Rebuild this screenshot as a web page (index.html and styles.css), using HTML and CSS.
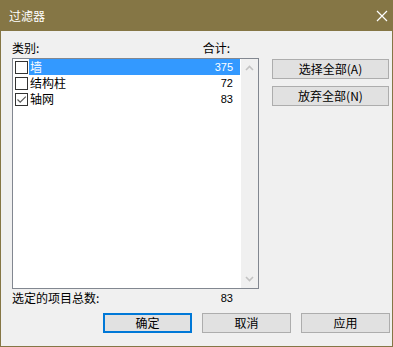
FILE: index.html
```html
<!DOCTYPE html>
<html>
<head>
<meta charset="utf-8">
<link rel="stylesheet" href="styles.css">
</head>
<body>
<div class="window">
  <div class="titlebar">
    <span class="title">过滤器</span>
    <svg class="close" width="12" height="12" viewBox="0 0 12 12"><path d="M1 1 L11 11 M11 1 L1 11" stroke="#ffffff" stroke-width="1.2" fill="none"/></svg>
  </div>
  <div class="content">
    <div class="main">
      <div class="left">
        <div class="header"><span>类别:</span><span class="total-label">合计:</span></div>
        <div class="listbox">
          <div class="rows">
            <div class="row">
              <span class="check"></span>
              <div class="item selected"><span class="name">墙</span><span class="num">375</span></div>
            </div>
            <div class="row">
              <span class="check"></span>
              <div class="item"><span class="name">结构柱</span><span class="num">72</span></div>
            </div>
            <div class="row">
              <span class="check"><svg width="11" height="11" viewBox="0 0 11 11"><path d="M1.5 5.5 L4.2 8.2 L9.8 2.6" stroke="#5a5a5a" stroke-width="1.2" fill="none"/></svg></span>
              <div class="item"><span class="name">轴网</span><span class="num">83</span></div>
            </div>
          </div>
          <div class="scrollbar">
            <svg width="9" height="6" viewBox="0 0 9 6"><path d="M1 5 L4.5 1.5 L8 5" stroke="#c3c3c3" stroke-width="1.6" fill="none"/></svg>
            <svg width="9" height="6" viewBox="0 0 9 6"><path d="M1 1 L4.5 4.5 L8 1" stroke="#c3c3c3" stroke-width="1.6" fill="none"/></svg>
          </div>
        </div>
        <div class="footer"><span>选定的项目总数:</span><span class="num">83</span></div>
      </div>
      <div class="right">
        <button class="btn side">选择全部(A)</button>
        <button class="btn side">放弃全部(N)</button>
      </div>
    </div>
    <div class="actions">
      <button class="btn act default">确定</button>
      <button class="btn act">取消</button>
      <button class="btn act">应用</button>
    </div>
  </div>
</div>
</body>
</html>
```

FILE: styles.css
```css
html, body {
  margin: 0;
  padding: 0;
}
body {
  width: 393px;
  height: 347px;
  overflow: hidden;
  font-family: "Noto Sans CJK SC", "Liberation Sans", sans-serif;
  font-size: 12px;
  color: #000;
}
.window {
  box-sizing: border-box;
  width: 393px;
  height: 347px;
  background: #f0f0f0;
  border: 1px solid #857645;
  border-top: none;
  display: flex;
  flex-direction: column;
}
.titlebar {
  height: 31px;
  margin: 0 -1px;
  background: #857645;
  display: flex;
  align-items: center;
  justify-content: space-between;
  padding: 0 3px 0 9px;
  color: #fff;
  flex-shrink: 0;
}
.title {
  font-size: 12px;
  line-height: 14px;
}
.close {
  margin-right: 2px;
}
.content {
  padding: 0 0 0 11px;
  display: flex;
  flex-direction: column;
}
.main {
  display: flex;
}
.left {
  width: 247px;
  display: flex;
  flex-direction: column;
}
.header {
  margin-top: 10px;
  height: 14px;
  line-height: 14px;
  display: flex;
  justify-content: space-between;
}
.total-label {
  margin-right: 29px;
}
.listbox {
  margin-top: 3px;
  height: 231px;
  box-sizing: border-box;
  border: 1px solid #828790;
  background: #fff;
  display: flex;
}
.rows {
  flex: 1;
  display: flex;
  flex-direction: column;
}
.row {
  height: 16px;
  display: flex;
  align-items: center;
}
.check {
  box-sizing: border-box;
  width: 13px;
  height: 13px;
  margin-left: 2px;
  border: 1px solid #333;
  background: #fff;
  display: flex;
  align-items: center;
  justify-content: center;
}
.item {
  flex: 1;
  height: 16px;
  margin: 0 1px 0 1px;
  padding: 0 7px 0 1px;
  display: flex;
  align-items: center;
  justify-content: space-between;
  line-height: 16px;
}
.item.selected {
  background: #3399ff;
  color: #fff;
}
.num {
  font-family: "Liberation Sans", "DejaVu Sans", sans-serif;
  font-size: 11px;
}
.scrollbar {
  width: 17px;
  background: #f0f0f0;
  display: flex;
  flex-direction: column;
  justify-content: space-between;
  align-items: center;
  padding: 6px 0 6px;
  box-sizing: border-box;
}
.footer {
  margin-top: 2px;
  height: 14px;
  line-height: 14px;
  display: flex;
  justify-content: space-between;
  padding-right: 26px;
}
.right {
  margin-left: 13px;
  padding-top: 28px;
  display: flex;
  flex-direction: column;
  gap: 7px;
}
.btn {
  box-sizing: border-box;
  font-family: "Noto Sans CJK SC", "Liberation Mono", monospace;
  font-size: 12px;
  height: 20px;
  line-height: 16px;
  padding: 0;
  background: #e1e1e1;
  border: 1px solid #adadad;
  color: #000;
}
.side {
  width: 117px;
}
.actions {
  margin-top: 8px;
  margin-left: 91px;
  display: flex;
  gap: 10px;
}
.act {
  width: 89px;
}
.act.default {
  border: 2px solid #0078d7;
}
```
